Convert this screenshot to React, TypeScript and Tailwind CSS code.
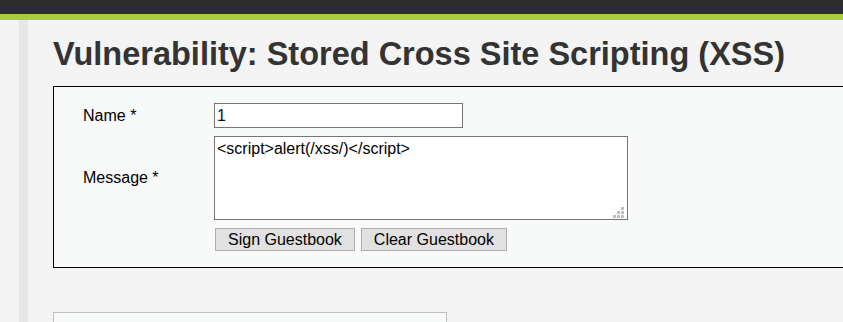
export default function App() {
  return (
    <div className="h-[322px] w-full overflow-hidden bg-[#f4f4f4] font-['Liberation_Sans',Arial,sans-serif] text-black">
      {/* Top bars */}
      <div className="h-[14px] bg-[#2d2d2d]" />
      <div className="h-[6px] bg-[#a6ce39]" />

      <div className="flex">
        <div className="w-[19px] shrink-0" />
        <div className="h-[302px] w-[9px] shrink-0 bg-[#e7e7e7]" />

        <div className="shrink-0 pl-[25px]">
          <h1 className="mt-[16px] whitespace-nowrap text-[32.5px] font-bold leading-[36px] text-[#333333]">
            Vulnerability: Stored Cross Site Scripting (XSS)
          </h1>

          {/* Guestbook form */}
          <div className="mt-[14px] w-[820px] border border-black bg-[#f8f9f9] pb-[16px] pl-[29px] pt-[16px]">
            <div className="flex items-center">
              <label className="w-[131px] text-[16px]">Name *</label>
              <input
                defaultValue="1"
                className="h-[25px] w-[249px] border border-[#767676] bg-white px-[2px] text-[16px] text-[#0a0a2a] outline-none"
              />
            </div>

            <div className="mt-[8px] flex items-center">
              <label className="w-[131px] text-[16px]">Message *</label>
              <div className="relative">
                <textarea
                  defaultValue="<script>alert(/xss/)</script>"
                  className="block h-[84px] w-[414px] resize-none border border-[#767676] bg-white px-[2px] pt-[3px] text-[16px] leading-[18px] outline-none"
                />
                {/* resize grip */}
                <div className="absolute bottom-[2px] right-[4px] grid grid-cols-3 gap-px">
                  <span className="size-[3px]" />
                  <span className="size-[3px]" />
                  <span className="size-[3px] bg-[#c0c0c0]" />
                  <span className="size-[3px]" />
                  <span className="size-[3px] bg-[#c0c0c0]" />
                  <span className="size-[3px] bg-[#c0c0c0]" />
                  <span className="size-[3px] bg-[#c0c0c0]" />
                  <span className="size-[3px] bg-[#c0c0c0]" />
                  <span className="size-[3px] bg-[#c0c0c0]" />
                </div>
              </div>
            </div>

            <div className="mt-[8px] flex gap-[6px] pl-[132px]">
              <button className="h-[23px] border border-[#adadad] bg-[#e1e1e1] px-[12px] text-[16px] leading-[20px]">
                Sign Guestbook
              </button>
              <button className="h-[23px] border border-[#adadad] bg-[#e1e1e1] px-[12px] text-[16px] leading-[20px]">
                Clear Guestbook
              </button>
            </div>
          </div>

          {/* Next panel */}
          <div className="mt-[44px] h-[60px] w-[394px] border border-[#c0c0c0] bg-[#f8f9f9]" />
        </div>
      </div>
    </div>
  );
}
